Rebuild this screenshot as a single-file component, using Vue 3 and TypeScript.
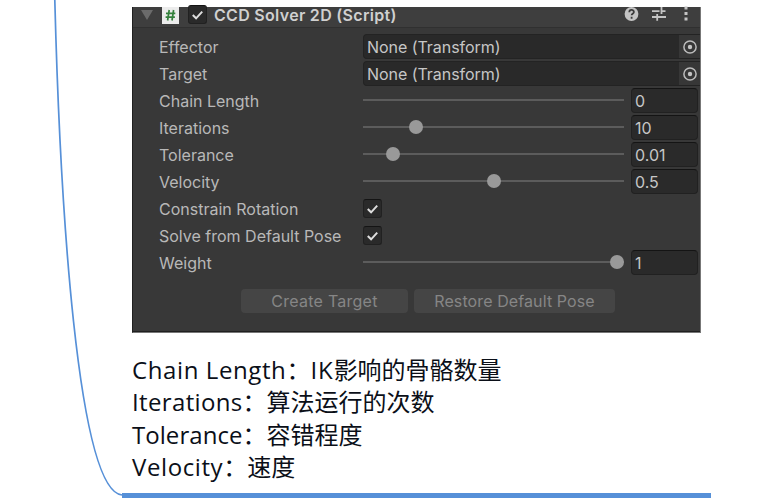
<script setup lang="ts">
interface Row {
  label: string
  kind: 'object' | 'slider' | 'toggle'
  value?: string
  knob?: number
}

const rows: Row[] = [
  { label: 'Effector', kind: 'object', value: 'None (Transform)' },
  { label: 'Target', kind: 'object', value: 'None (Transform)' },
  { label: 'Chain Length', kind: 'slider', value: '0' },
  { label: 'Iterations', kind: 'slider', value: '10', knob: 53 },
  { label: 'Tolerance', kind: 'slider', value: '0.01', knob: 30 },
  { label: 'Velocity', kind: 'slider', value: '0.5', knob: 131 },
  { label: 'Constrain Rotation', kind: 'toggle' },
  { label: 'Solve from Default Pose', kind: 'toggle' },
  { label: 'Weight', kind: 'slider', value: '1', knob: 254 },
]

const notes = [
  { term: 'Chain Length', latin: 'IK', text: '影响的骨骼数量', cls: 'chain' },
  { term: 'Iterations', latin: '', text: '算法运行的次数', cls: 'iter' },
  { term: 'Tolerance', latin: '', text: '容错程度', cls: 'tol' },
  { term: 'Velocity', latin: '', text: '速度', cls: 'vel' },
]
</script>

<template>
  <main class="page">
    <svg class="branch" width="780" height="501" viewBox="0 0 780 501">
      <path d="M54.8 0C60 200 77 491 122 495" fill="none" stroke="#5690d8" stroke-width="1.7" />
      <rect x="122" y="493" width="589" height="5" fill="#5690d8" />
    </svg>

    <section class="panel">
      <header class="head">
        <svg class="fold" width="14" height="12" viewBox="0 0 14 12"><path d="M1 1h12L7 11z" fill="#6b6b6b" /></svg>
        <svg class="script" width="17" height="17" viewBox="0 0 17 17">
          <path d="M0 0h17v17H0z" fill="#ececec" />
          <path d="M7.2 3L5.6 13.5M11.6 3L10 13.5M4 6.3h9.3M3.6 10.2h9.3" stroke="#34813c" stroke-width="1.7" fill="none" />
        </svg>
        <span class="check">
          <svg width="18" height="18" viewBox="0 0 18 18"><path d="M4 9l3.5 3.5L14 5.5" /></svg>
        </span>
        <h1 class="title">CCD Solver 2D (Script)</h1>
        <svg class="tools" width="70" height="20" viewBox="0 0 70 20">
          <circle cx="7.5" cy="9" r="6.9" fill="#c4c4c4" />
          <path d="M5.3 7.2c0-3 4.6-3 4.6-.2 0 1.7-2.3 1.7-2.3 3.2M7.6 11.8v1.9" fill="none" stroke="#3c3c3c" stroke-width="1.8" />
          <path d="M28 6.2h7.5M37.5 2v7M37.5 6.2h4M28 12h4.5M33.2 9v6.8M34 12h8" fill="none" stroke="#c4c4c4" stroke-width="1.8" />
          <path d="M60.5 1.5h3v3h-3zM60.5 7h3v3h-3zM60.5 12.5h3v3h-3z" fill="#c4c4c4" />
        </svg>
      </header>

      <div class="rows">
        <div v-for="row in rows" :key="row.label" class="row">
          <span class="label">{{ row.label }}</span>
          <div v-if="row.kind === 'object'" class="object">
            <span class="object-text">{{ row.value }}</span>
            <span class="picker">
              <svg width="16" height="16" viewBox="0 0 16 16">
                <circle cx="8" cy="8" r="6.1" fill="none" stroke="#bcbcbc" stroke-width="1.5" />
                <circle cx="8" cy="8" r="2.2" fill="#c4c4c4" />
              </svg>
            </span>
          </div>
          <template v-else-if="row.kind === 'slider'">
            <div class="track">
              <span v-if="row.knob !== undefined" class="knob" :style="{ left: row.knob + 'px' }"></span>
            </div>
            <span class="number">{{ row.value }}</span>
          </template>
          <span v-else class="check">
            <svg width="18" height="18" viewBox="0 0 18 18"><path d="M4 9l3.5 3.5L14 5.5" /></svg>
          </span>
        </div>
      </div>

      <div class="actions">
        <button class="btn create">Create Target</button>
        <button class="btn restore">Restore Default Pose</button>
      </div>
    </section>

    <section class="notes">
      <p v-for="note in notes" :key="note.term"><span :class="note.cls">{{ note.term }}</span>：<span v-if="note.latin" class="latin">{{ note.latin }}</span>{{ note.text }}</p>
    </section>
  </main>
</template>

<style>
body {
  background: #fff;
}
</style>

<style scoped>
.page {
  position: relative;
  box-sizing: border-box;
  width: 780px;
  height: 501px;
  padding: 7px 0 0 132px;
  overflow: hidden;
}
.branch {
  position: absolute;
  left: 0;
  top: 0;
}
.panel {
  box-sizing: border-box;
  width: 569px;
  height: 326px;
  background: #383838;
  border-left: 1px solid #202020;
  border-right: 1px solid #777;
  border-bottom: 1px solid #777;
  box-shadow: inset 0 -1px #202020;
  color: #b8b8b8;
  font: 16px/27px Inter, "Liberation Sans", sans-serif;
}
.head {
  box-sizing: border-box;
  display: flex;
  align-items: center;
  height: 21px;
  padding: 0 6px 4px 7px;
  background: #3e3e3e;
  border-bottom: 1px solid #303030;
}
.fold, .script, .head .check, .tools {
  flex: none;
}
.tools {
  margin: -2px 0;
}
.script {
  margin-left: 8px;
}
.head .check {
  margin-left: 9px;
}
.title {
  flex: 1;
  margin: 0 0 0 7px;
  font-size: 16px;
  line-height: 16px;
  font-weight: 600;
  letter-spacing: 0.3px;
  color: #d0d0d0;
  white-space: nowrap;
}
.rows {
  padding: 6px 0 0 26px;
}
.row {
  display: flex;
  align-items: center;
  height: 27px;
}
.label {
  width: 204px;
  flex: none;
  white-space: nowrap;
}
.object {
  box-sizing: border-box;
  display: flex;
  flex: 1;
  height: 25px;
  margin-top: -2px;
  background: #292929;
  border: 1px solid #232323;
  border-right: 0;
  border-radius: 4px 0 0 4px;
  line-height: 25px;
  letter-spacing: -0.05px;
  color: #c6c6c6;
}
.object-text {
  flex: 1;
  padding-left: 3px;
}
.picker {
  display: flex;
  align-items: center;
  justify-content: center;
  width: 21px;
  background: #373737;
}
.track {
  position: relative;
  width: 261px;
  height: 2px;
  margin: -3px 7px 0 0;
  background: #5c5c5c;
}
.knob {
  position: absolute;
  top: -6px;
  width: 14px;
  height: 14px;
  margin-left: -7px;
  border-radius: 50%;
  background: #999;
}
.number {
  box-sizing: border-box;
  width: 67px;
  height: 25px;
  margin-top: -2px;
  padding-left: 3px;
  background: #2a2a2a;
  border: 1px solid #212121;
  border-top-color: #141414;
  border-radius: 4px;
  line-height: 25px;
  color: #c6c6c6;
}
.check {
  box-sizing: border-box;
  display: flex;
  width: 19px;
  height: 19px;
  margin-top: -2px;
  background: #2a2a2a;
  border: 1px solid #212121;
  border-top-color: #141414;
  border-radius: 3px;
}
.check path {
  fill: none;
  stroke: #dedede;
  stroke-width: 2.1;
}
.actions {
  display: flex;
  gap: 6px;
  padding: 12px 0 0 108px;
}
.btn {
  height: 24px;
  padding: 0;
  border: 0;
  border-radius: 4px;
  background: #454545;
  color: #868686;
  font: inherit;
  line-height: 24px;
}
.create {
  width: 167px;
  letter-spacing: 0.25px;
}
.restore {
  width: 201px;
  letter-spacing: 0.1px;
}
.notes {
  padding-top: 21px;
  color: #0b0f18;
  font: 24px/32.3px "Open Sans", "Noto Sans CJK SC", sans-serif;
}
.notes p {
  height: 32.3px;
  margin: 0;
  white-space: nowrap;
}
.chain {
  letter-spacing: 0.6px;
}
.latin {
  letter-spacing: 0.9px;
}
.iter {
  letter-spacing: 0.35px;
}
.tol {
  letter-spacing: 0.05px;
}
.vel {
  letter-spacing: 0.6px;
}
</style>
